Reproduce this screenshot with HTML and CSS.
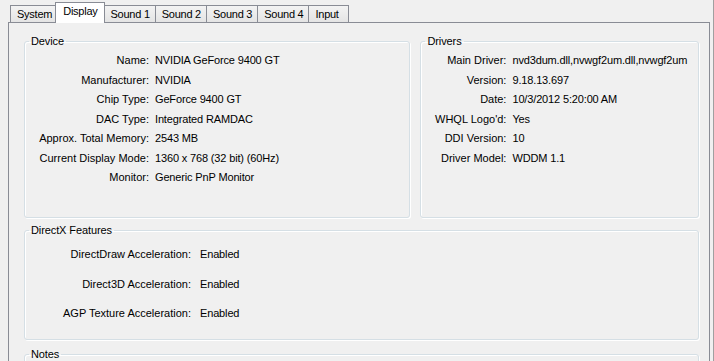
FILE: index.html
```html
<!doctype html>
<html>
    <head>
        <meta charset="utf-8">
        <title>DirectX Diagnostic Tool - Display</title>
        <link rel="stylesheet" href="styles.css">
    </head>
    <body>
        <div class="tabs">
            <div class="tab">System</div>
            <div class="tab active">Display</div>
            <div class="tab">Sound 1</div>
            <div class="tab">Sound 2</div>
            <div class="tab">Sound 3</div>
            <div class="tab">Sound 4</div>
            <div class="tab last">Input</div>
        </div>
        <div class="panel">
            <div class="top-row">
                <fieldset class="group device">
                    <legend>Device</legend>
                    <div class="rows">
                        <span class="k">Name:</span><span class="v">NVIDIA GeForce 9400 GT</span>
                        <span class="k">Manufacturer:</span><span class="v">NVIDIA</span>
                        <span class="k">Chip Type:</span><span class="v">GeForce 9400 GT</span>
                        <span class="k">DAC Type:</span><span class="v">Integrated RAMDAC</span>
                        <span class="k">Approx. Total Memory:</span><span class="v">2543 MB</span>
                        <span class="k">Current Display Mode:</span><span class="v">1360 x 768 (32 bit) (60Hz)</span>
                        <span class="k">Monitor:</span><span class="v">Generic PnP Monitor</span>
                    </div>
                </fieldset>
                <fieldset class="group drivers">
                    <legend>Drivers</legend>
                    <div class="rows">
                        <span class="k">Main Driver:</span><span class="v">nvd3dum.dll,nvwgf2um.dll,nvwgf2um</span>
                        <span class="k">Version:</span><span class="v">9.18.13.697</span>
                        <span class="k">Date:</span><span class="v">10/3/2012 5:20:00 AM</span>
                        <span class="k">WHQL Logo'd:</span><span class="v">Yes</span>
                        <span class="k">DDI Version:</span><span class="v">10</span>
                        <span class="k">Driver Model:</span><span class="v">WDDM 1.1</span>
                    </div>
                </fieldset>
            </div>
            <fieldset class="group directx">
                <legend>DirectX Features</legend>
                <div class="rows">
                    <span class="k">DirectDraw Acceleration:</span><span class="v">Enabled</span>
                    <span class="k">Direct3D Acceleration:</span><span class="v">Enabled</span>
                    <span class="k">AGP Texture Acceleration:</span><span class="v">Enabled</span>
                </div>
            </fieldset>
            <fieldset class="group notes">
                <legend>Notes</legend>
            </fieldset>
        </div>
    </body>
</html>
```

FILE: styles.css
```css
* {
    box-sizing: border-box;
}
body {
    margin: 0;
    width: 714px;
    height: 361px;
    overflow: hidden;
    background: #f0f0f0;
    color: #000;
    font-family: "Liberation Sans", Arial, sans-serif;
    font-size: 11px;
    border-right: 1px solid #a0a0a0;
}

/* tab strip */
.tabs {
    display: flex;
    align-items: flex-end;
    height: 22px;
    padding-left: 10px;
}
.tab {
    height: 17px;
    line-height: 16px;
    padding: 0 5px 0 6px;
    margin-right: -1px;
    letter-spacing: -0.25px;
    border: 1px solid #898c95;
    border-bottom: 0;
    background: linear-gradient(#f3f3f3, #e4e4e4);
}
.tab.active {
    position: relative;
    z-index: 1;
    height: 21px;
    line-height: 17px;
    margin: 0 -1px -1px -2px;
    padding: 0 6px 0 7px;
    background: #fff;
}
.tab.last {
    padding-right: 9px;
}

/* page */
.panel {
    width: 702px;
    height: 339px;
    margin-left: 8px;
    padding: 12px 10px 0 15px;
    border: 1px solid #898c95;
    border-bottom: 0;
}
.top-row {
    display: flex;
    gap: 10px;
}

/* group boxes */
.group {
    margin: 0;
    padding: 0;
    min-width: 0;
    border: 1px solid #d5dfe5;
    border-radius: 3px;
    box-shadow: inset 1px 1px 0 #fff, 1px 1px 0 #fff;
    overflow: hidden;
}
.group legend {
    margin-left: 4px;
    padding: 0 2px;
    line-height: 13px;
    letter-spacing: -0.1px;
}
.device {
    width: 387px;
    height: 183px;
}
.drivers {
    width: 279px;
    height: 183px;
}
.directx {
    margin-top: 6px;
    height: 116px;
}
.notes {
    margin-top: 8px;
    height: 30px;
}

.rows {
    display: grid;
    column-gap: 6px;
    padding-top: 3px;
    line-height: 19.5px;
    white-space: nowrap;
}
.rows .k {
    text-align: right;
}
.rows .v {
    overflow: hidden;
    letter-spacing: -0.15px;
}
.device .rows {
    grid-template-columns: 124px 1fr;
}
.drivers .rows {
    grid-template-columns: 85px 1fr;
}
.directx .rows {
    grid-template-columns: 166px 1fr;
    column-gap: 9px;
    padding-top: 3px;
    line-height: 29.5px;
}
```
